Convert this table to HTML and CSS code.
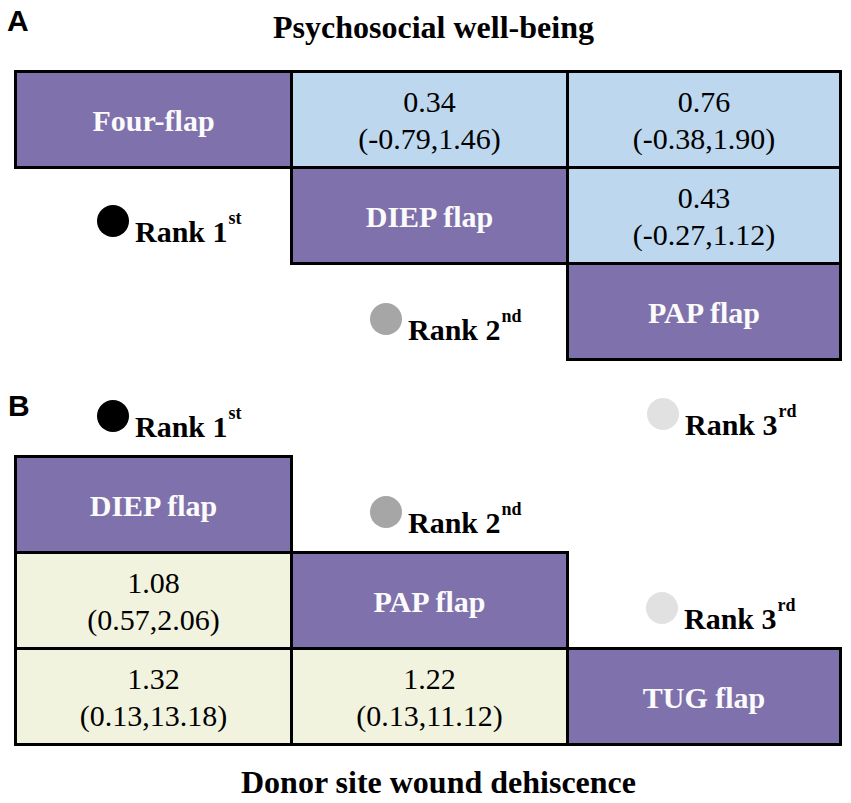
FILE: index.html
```html
<!DOCTYPE html>
<html>
<head>
<meta charset="utf-8">
<link rel="stylesheet" href="styles.css">
</head>
<body>
<div class="page">
  <div class="head-a">
    <span class="tag">A</span>
    <div class="title title-top">Psychosocial well-being</div>
  </div>

  <div class="grid grid-a">
    <div class="cell hdr">Four-flap</div>
    <div class="cell val blue">0.34<br>(-0.79,1.46)</div>
    <div class="cell val blue">0.76<br>(-0.38,1.90)</div>

    <div class="slot slot-first">
      <div class="rank"><span class="dot dot-1"></span><span class="rank-text">Rank 1<sup>st</sup></span></div>
    </div>
    <div class="cell hdr">DIEP flap</div>
    <div class="cell val blue">0.43<br>(-0.27,1.12)</div>

    <div class="slot"></div>
    <div class="slot">
      <div class="rank"><span class="dot dot-2"></span><span class="rank-text">Rank 2<sup>nd</sup></span></div>
    </div>
    <div class="cell hdr">PAP flap</div>
  </div>

  <div class="head-b">
    <span class="tag">B</span>
    <div class="rank rank-head"><span class="dot dot-1"></span><span class="rank-text">Rank 1<sup>st</sup></span></div>
    <div class="rank rank-head rank-head-3"><span class="dot dot-3"></span><span class="rank-text">Rank 3<sup>rd</sup></span></div>
  </div>

  <div class="grid grid-b">
    <div class="cell hdr">DIEP flap</div>
    <div class="slot">
      <div class="rank"><span class="dot dot-2"></span><span class="rank-text">Rank 2<sup>nd</sup></span></div>
    </div>
    <div class="slot"></div>

    <div class="cell val yellow">1.08<br>(0.57,2.06)</div>
    <div class="cell hdr">PAP flap</div>
    <div class="slot">
      <div class="rank"><span class="dot dot-3"></span><span class="rank-text">Rank 3<sup>rd</sup></span></div>
    </div>

    <div class="cell val yellow">1.32<br>(0.13,13.18)</div>
    <div class="cell val yellow">1.22<br>(0.13,11.12)</div>
    <div class="cell hdr">TUG flap</div>
  </div>

  <div class="title title-bottom">Donor site wound dehiscence</div>
</div>
</body>
</html>
```

FILE: styles.css
```css
html, body {
  margin: 0;
  padding: 0;
  background: #ffffff;
}

.page {
  width: 851px;
  height: 803px;
  font-family: "Liberation Serif", "Times New Roman", serif;
  color: #000;
  overflow: hidden;
}

.tag {
  font-family: "Liberation Sans", Arial, sans-serif;
  font-weight: bold;
  font-size: 30px;
  line-height: 30px;
  width: 22px;
  flex: none;
}

.title {
  font-weight: bold;
  font-size: 32px;
  line-height: 40px;
  text-align: center;
}

.head-a {
  display: flex;
  align-items: flex-start;
  padding: 7px 0 0 7px;
}

.head-a .tag {
  margin-top: -1px;
}

.title-top {
  flex: 1;
  padding-right: 13px;
}

.grid {
  display: grid;
  grid-template-columns: 276px 276px 273px;
  grid-template-rows: 96px 96px 96px;
  margin-left: 17px;
}

.grid-a {
  margin-top: 26px;
}

.cell {
  border: 3px solid #000;
  margin: -3px 0 0 -3px;
  display: flex;
  align-items: center;
  justify-content: center;
  text-align: center;
}

.hdr {
  background: #7f71ab;
  color: #fbfbfb;
  font-weight: bold;
  font-size: 30px;
  padding-top: 2px;
}

.val {
  font-size: 30px;
  line-height: 37px;
  padding-top: 1px;
}

.blue {
  background: #bdd7ee;
}

.yellow {
  background: #f2f3df;
}

.slot {
  padding: 38px 0 0 77px;
}

.slot-first {
  padding-left: 80px;
  padding-top: 36px;
}

.rank {
  display: flex;
  align-items: flex-start;
}

.dot {
  width: 32px;
  height: 32px;
  border-radius: 50%;
  flex: none;
}

.dot-1 { background: #000; }
.dot-2 { background: #a6a6a6; }
.dot-3 { background: #e1e1e1; }

.rank-text {
  font-weight: bold;
  font-size: 30px;
  line-height: 30px;
  margin-left: 6px;
  margin-top: 12px;
  white-space: nowrap;
}

.rank-text sup {
  font-size: 18px;
  line-height: 0;
  vertical-align: 18px;
  margin-left: 1px;
}

.head-b {
  display: grid;
  grid-template-columns: 89px 550px auto;
  padding-left: 8px;
  margin-top: 30px;
  height: 51px;
}

.head-b .tag {
  margin-top: 0;
}

.rank-head {
  margin-top: 9px;
}

.rank-head-3 {
  margin-top: 7px;
}

.grid-b {
  margin-top: 16px;
}

.title-bottom {
  margin-top: 16px;
  padding-left: 26px;
}
```
